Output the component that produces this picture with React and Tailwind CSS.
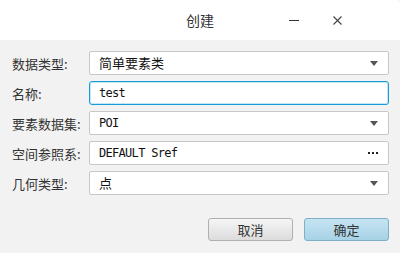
import React from "react";

const cjk = { fontFamily: '"Noto Sans CJK SC", "Noto Sans", sans-serif' };

function Arrow() {
  return (
    <svg width="8" height="5" viewBox="0 0 8 5" className="shrink-0">
      <path d="M0 0 L8 0 L4 5 Z" fill="#555" />
    </svg>
  );
}

function Dots() {
  return (
    <svg width="10" height="2" viewBox="0 0 10 2" className="shrink-0">
      <rect x="0" y="0" width="2" height="2" fill="#222" />
      <rect x="4" y="0" width="2" height="2" fill="#222" />
      <rect x="8" y="0" width="2" height="2" fill="#222" />
    </svg>
  );
}

function Value({ text, latin }) {
  if (latin) {
    return (
      <span
        className="text-[12px] tracking-[-0.7px] text-[#111]"
        style={{ fontFamily: '"DejaVu Sans Mono", monospace' }}
      >
        {text}
      </span>
    );
  }
  return <span className="text-[13px] text-[#111]">{text}</span>;
}

function Row({ label, value, latin, kind }) {
  const focused = kind === "input";
  return (
    <div className="flex items-center h-[24px]">
      <div className="w-[77px] text-[13px] text-[#333] leading-none">{label}</div>
      <div
        className={
          "flex items-center justify-between w-[300px] h-[24px] pl-[9px] pr-[10px] bg-white rounded-[2px] border " +
          (focused
            ? "border-[#1a9ad6] rounded-[3px] shadow-[inset_0_0_0_1px_#c4e6f5]"
            : "border-[#c8c8c8]")
        }
      >
        <Value text={value} latin={latin} />
        {kind === "select" && <Arrow />}
        {kind === "dots" && <Dots />}
      </div>
    </div>
  );
}

export default function App() {
  return (
    <div className="w-[400px] h-[253px] bg-[#f2f2f2] flex flex-col overflow-hidden" style={cjk}>
      <div className="h-[40px] bg-white relative flex items-center justify-center shrink-0 rounded-tr-[4px]">
        <span className="text-[14px] text-[#333]">创建</span>
        <div className="absolute left-[289px] top-[20px] w-[10px] h-[1px] bg-[#333]" />
        <svg className="absolute left-[333px] top-[16px]" width="9" height="9" viewBox="0 0 9 9">
          <path d="M0.5 0.5 L8.5 8.5 M8.5 0.5 L0.5 8.5" stroke="#444" strokeWidth="1.1" />
        </svg>
      </div>
      <div className="flex flex-col gap-[6px] pt-[11px] pl-[12px]">
        <Row label="数据类型:" value="简单要素类" kind="select" />
        <Row label="名称:" value="test" latin kind="input" />
        <Row label="要素数据集:" value="POI" latin kind="select" />
        <Row label="空间参照系:" value="DEFAULT Sref" latin kind="dots" />
        <Row label="几何类型:" value="点" kind="select" />
      </div>
      <div className="flex justify-end gap-[11px] pr-[11px] mt-[23px]">
        <button className="w-[85px] h-[23px] rounded-[3px] border border-[#b0b0b0] bg-gradient-to-b from-[#f6f6f6] to-[#dcdcdc] text-[13px] text-[#333] leading-none">
          取消
        </button>
        <button className="w-[85px] h-[23px] rounded-[3px] border border-[#7fb0c8] bg-gradient-to-b from-[#c6e4f2] to-[#a6d2e6] text-[13px] text-[#333] leading-none">
          确定
        </button>
      </div>
    </div>
  );
}
